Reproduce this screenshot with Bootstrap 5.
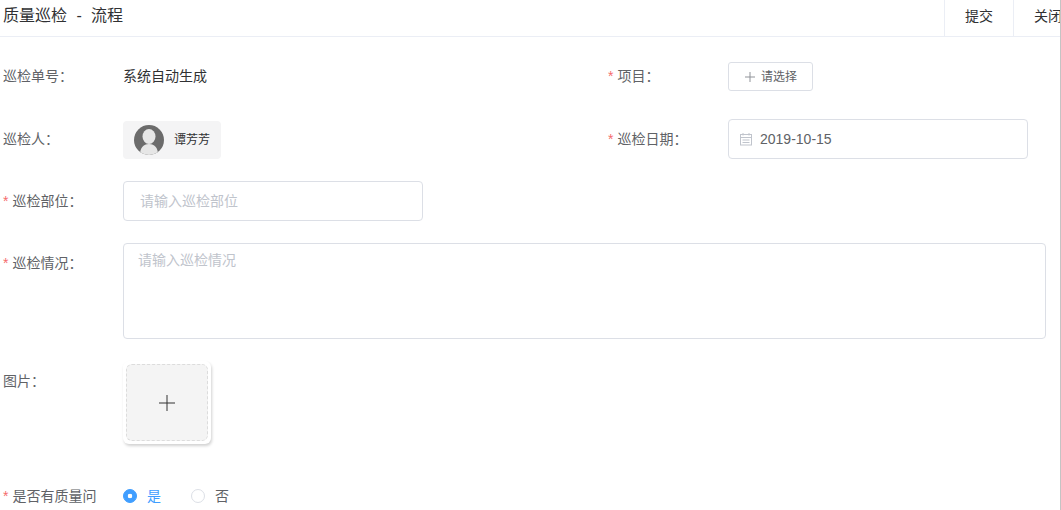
<!DOCTYPE html>
<html lang="zh">
<head>
<meta charset="utf-8">
<title>质量巡检 - 流程</title>
<link href="https://cdn.jsdelivr.net/npm/bootstrap@5.3.0/dist/css/bootstrap.min.css" rel="stylesheet">
<style>
html,body{height:510px;overflow:hidden;background:#fff}
body{font-family:"Liberation Sans","Noto Sans CJK SC",sans-serif;font-size:14px;color:#606266;border-right:1px solid #c4c4c4;width:1061px}
.page-top{height:37px;border-bottom:1px solid #ebeef5;overflow:hidden}
.page-title{font-size:16px;color:#303133;padding-left:3px;line-height:32px;white-space:pre;word-spacing:.25px}
.top-actions{width:116px;flex:none;overflow:hidden}
.top-btn{flex:none;height:36px;padding:0 20px 4px;border:0;border-left:1px solid #ebeef5;border-radius:0;background:#fff;color:#303133;font-size:14px}
.form-wrap{padding:19px 0 0 3px}
.item-row{margin-bottom:22px;min-height:40px}
.row-first{margin-bottom:23px}
.row-upload{margin-bottom:32px}
.item-col{flex:0 0 605px}
.item-label{flex:0 0 120px;line-height:40px;white-space:nowrap;overflow:hidden}
.req{color:#f56c6c;margin-right:4px;font-size:14px}
.static-val{line-height:40px;color:#303133}
.pick-btn{width:85px;height:29px;margin-top:6px;padding:0 0 0 1px;font-size:12px;color:#606266;border:1px solid #dcdfe6;border-radius:3px;background:#fff;display:flex;align-items:center;justify-content:center;gap:6px}
.user-chip{width:98px;height:38px;margin-top:2px;background:#f4f4f5;border-radius:4px;padding-left:11px;gap:10px;font-size:12px;color:#303133}
.field-box{height:40px;width:300px;border:1px solid #dcdfe6;border-radius:4px;font-size:14px;color:#606266;padding:0 16px;box-shadow:none;font-family:inherit}
.field-box::placeholder,.area-box::placeholder{color:#c0c4cc;opacity:1}
.date-box{padding:0 0 0 10px;gap:7px}
.area-box{width:923px;height:96px;resize:none;border:1px solid #dcdfe6;border-radius:4px;padding:6px 14px;font-size:14px;line-height:21px;color:#606266;box-shadow:none;font-family:inherit}
.upload-card{width:88px;height:83px;padding:3px;background:#fff;border-radius:6px;box-shadow:1px 2px 3px rgba(0,0,0,.18)}
.upload-inner{height:77px;background:#f4f4f4;border:1px dashed #dcdcdc;border-radius:6px}
.radio-mark{width:14px;height:14px;margin:0;border-color:#dcdfe6;flex:none}
.radio-mark:checked{background-color:#409eff;border-color:#409eff;background-image:radial-gradient(circle,#fff 2px,transparent 2.6px)}
.radio-text{margin:0 0 0 10px;color:#606266}
.radio-on{color:#409eff;margin-right:30px}
.radio-line{height:40px}
</style>
</head>
<body>
<div class="page-top d-flex justify-content-between">
  <div class="page-title flex-grow-1">质量巡检  -  流程</div>
  <div class="d-flex top-actions">
    <button type="button" class="btn top-btn">提交</button>
    <button type="button" class="btn top-btn">关闭</button>
  </div>
</div>
<form class="form-wrap">
  <div class="d-flex item-row row-first">
    <div class="item-col d-flex"><div class="item-label">巡检单号：</div><div class="static-val">系统自动生成</div></div>
    <div class="item-col d-flex">
      <div class="item-label"><span class="req">*</span>项目：</div>
      <button type="button" class="btn pick-btn">
        <svg width="10" height="10" viewBox="0 0 10 10"><path d="M5 0v10M0 5h10" stroke="#909399" stroke-width="1" fill="none"/></svg>请选择
      </button>
    </div>
  </div>
  <div class="d-flex item-row">
    <div class="item-col d-flex"><div class="item-label">巡检人：</div>
      <div class="user-chip d-flex align-items-center">
        <svg width="30" height="30" viewBox="0 0 30 30"><defs><clipPath id="ac"><circle cx="15" cy="15" r="15"/></clipPath></defs><circle cx="15" cy="15" r="15" fill="#6b6b6b"/><g clip-path="url(#ac)" fill="#e6e6e6"><ellipse cx="15" cy="11.5" rx="6.5" ry="7.5"/><path d="M6 30c0-7 3-11 9-11s9 4 9 11z"/></g></svg>
        <span>谭芳芳</span>
      </div>
    </div>
    <div class="item-col d-flex">
      <div class="item-label"><span class="req">*</span>巡检日期：</div>
      <div class="field-box date-box d-flex align-items-center">
        <svg width="14" height="14" viewBox="0 0 14 14" fill="none" stroke="#c0c4cc"><rect x="1.5" y="2.5" width="11" height="10.5"/><path d="M1.5 5.5h11M4 1v2.5M10 1v2.5M3.5 8h7M3.5 10.5h7"/></svg>
        <span>2019-10-15</span>
      </div>
    </div>
  </div>
  <div class="d-flex item-row">
    <div class="item-label"><span class="req">*</span>巡检部位：</div>
    <input type="text" class="form-control field-box" placeholder="请输入巡检部位">
  </div>
  <div class="d-flex item-row">
    <div class="item-label"><span class="req">*</span>巡检情况：</div>
    <textarea class="form-control area-box" placeholder="请输入巡检情况"></textarea>
  </div>
  <div class="d-flex item-row row-upload">
    <div class="item-label">图片：</div>
    <div class="upload-card">
      <div class="upload-inner d-flex align-items-center justify-content-center">
        <svg width="16" height="16" viewBox="0 0 16 16"><path d="M8 0v16M0 8h16" stroke="#333" stroke-width="1" fill="none"/></svg>
      </div>
    </div>
  </div>
  <div class="d-flex radio-line">
    <div class="item-label"><span class="req">*</span>是否有质量问</div>
    <div class="d-flex align-items-center">
      <input class="form-check-input radio-mark" type="radio" name="q" id="qa" checked>
      <label class="radio-text radio-on" for="qa">是</label>
      <input class="form-check-input radio-mark" type="radio" name="q" id="qb">
      <label class="radio-text" for="qb">否</label>
    </div>
  </div>
</form>
<script src="https://cdn.jsdelivr.net/npm/bootstrap@5.3.0/dist/js/bootstrap.bundle.min.js"></script>
</body>
</html>
